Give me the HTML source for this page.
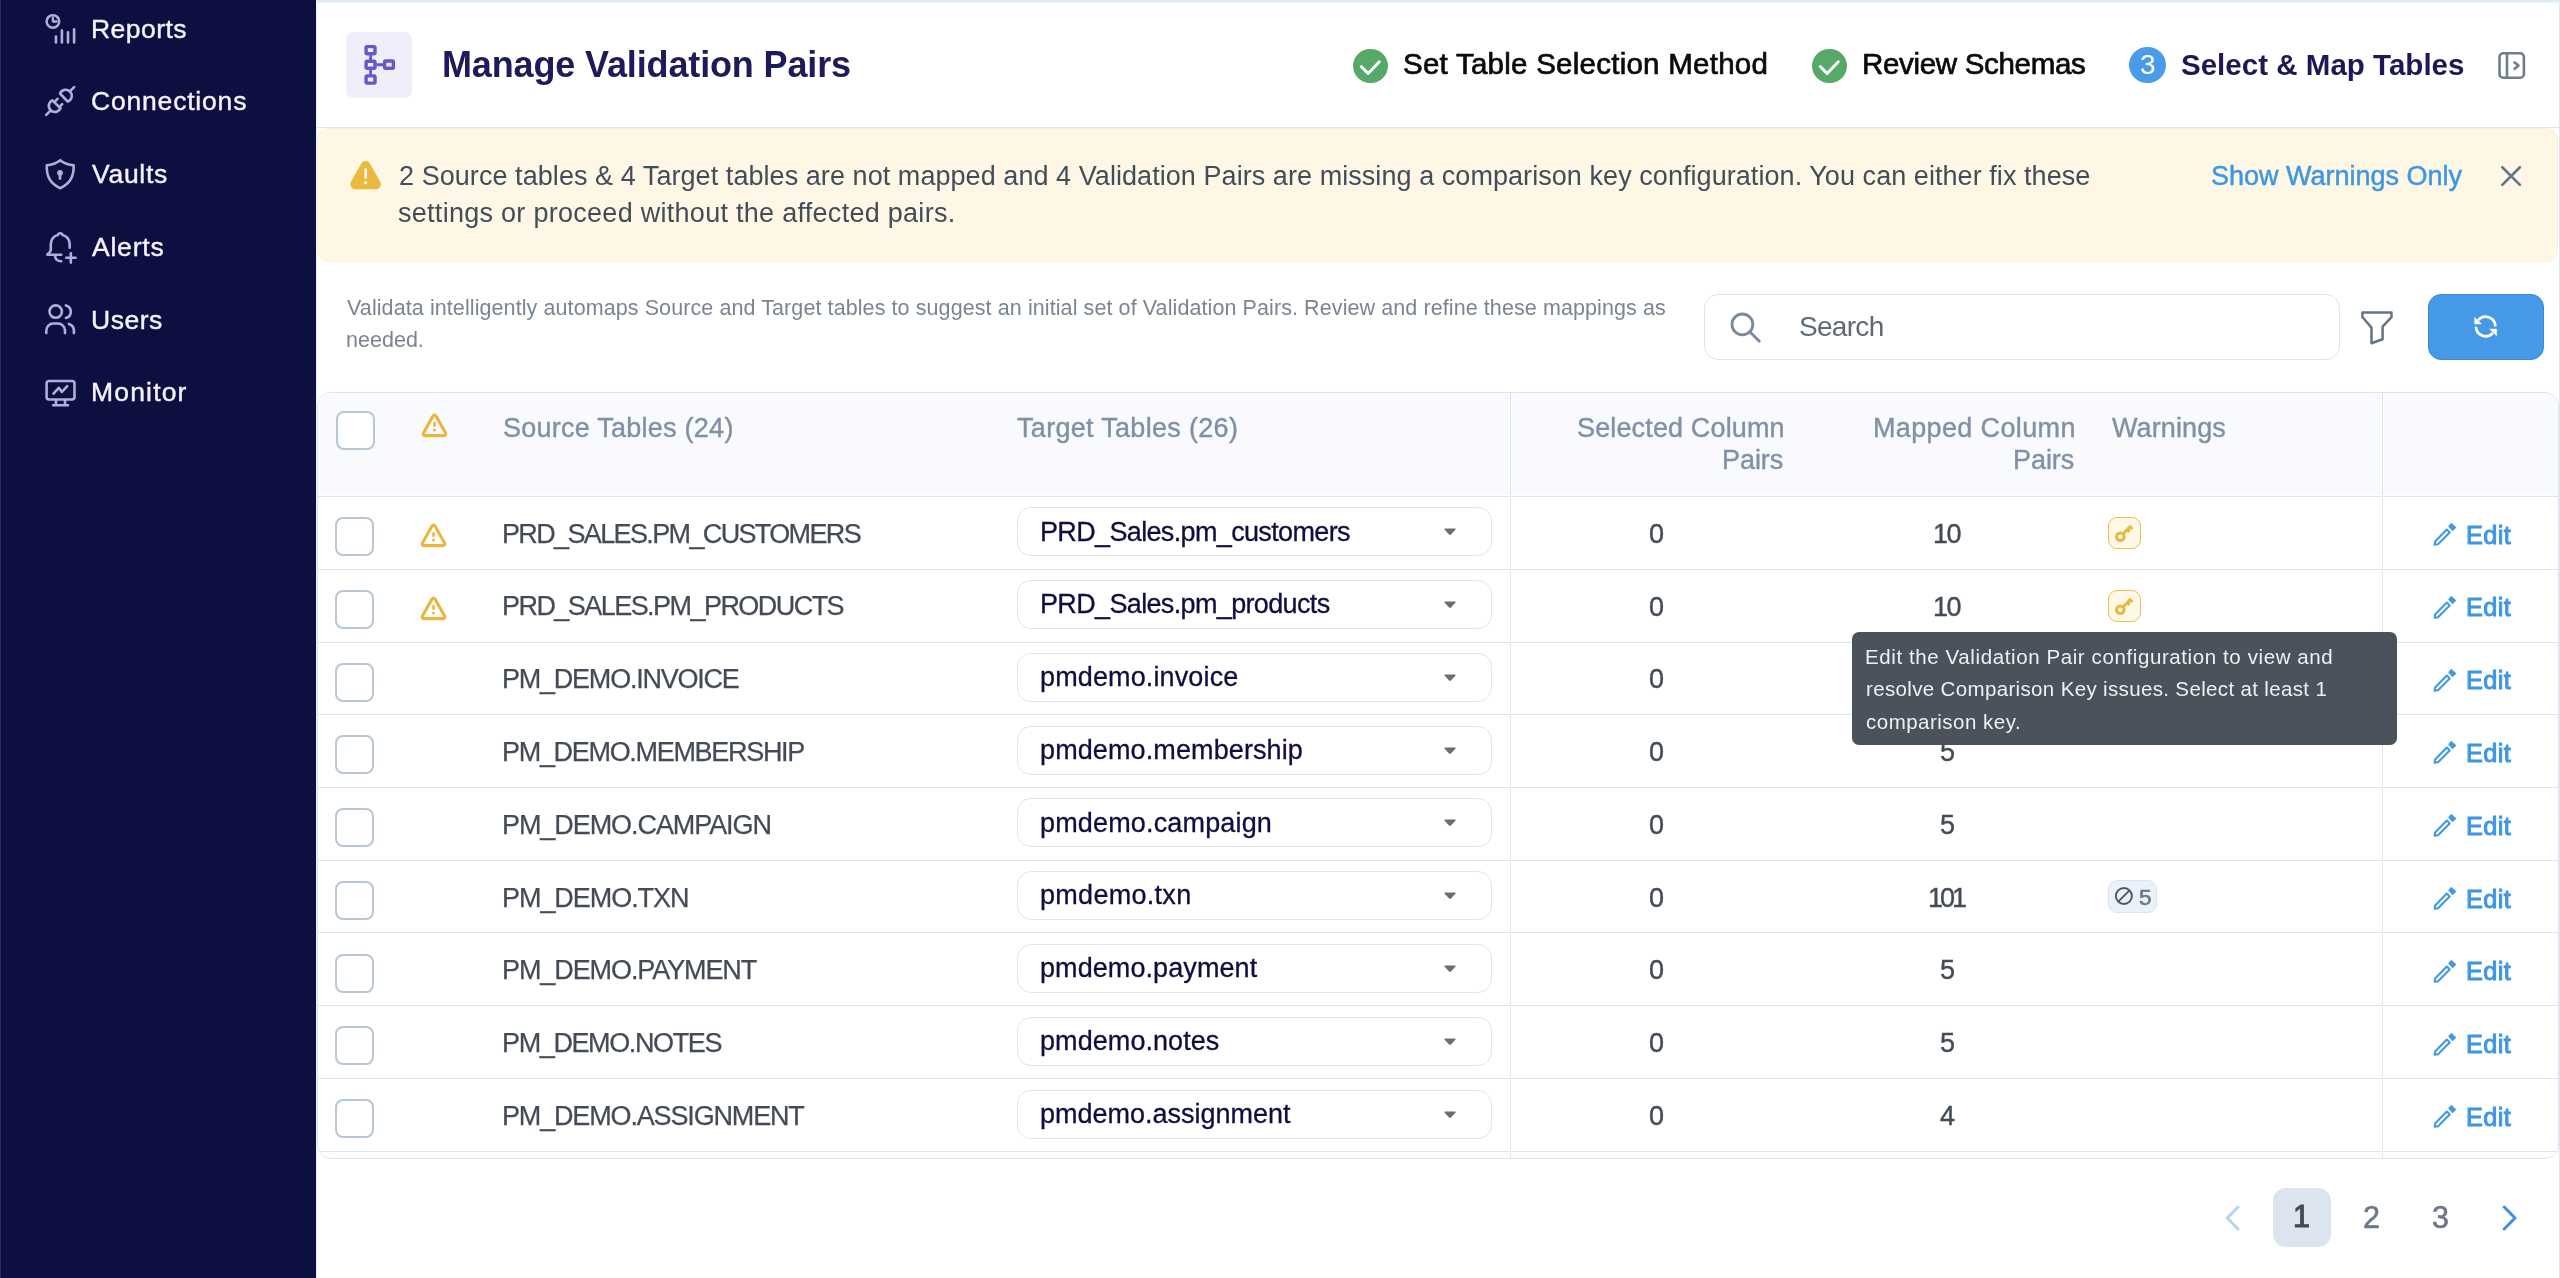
<!DOCTYPE html>
<html lang="en"><head><meta charset="utf-8"><title>Manage Validation Pairs</title>
<style>
*{box-sizing:border-box;margin:0;padding:0}
html,body{width:2560px;height:1278px;overflow:hidden;background:#fff}
body{position:relative;font-family:"Liberation Sans",sans-serif;-webkit-font-smoothing:antialiased}
div,svg,span{position:absolute}
.t{white-space:pre;line-height:1;display:block;will-change:transform}
#side{left:0;top:0;width:316px;height:1278px;background:#0e0f41}
#side-edge{left:0;top:0;width:1px;height:1278px;background:#2a2a57}
.si{left:44px;width:34px;height:34px;fill:none;stroke:#b0aedb;stroke-width:2.6;stroke-linecap:round;stroke-linejoin:round}
#lborder{left:316px;top:0;width:1px;height:1278px;background:#e8f2fb}
#rborder{left:2559px;top:0;width:1px;height:1278px;background:#dce5f0}
#topline{left:317px;top:0;width:2243px;height:3px;background:linear-gradient(#d9e4f1,#eef3f9)}
#hline{left:317px;top:127px;width:2243px;height:1px;background:#dce5ef}
#hicon{left:346px;top:32px;width:66px;height:66px;border-radius:7px;background:#efeefa}
.gc{width:34.7px;height:34.4px;border-radius:50%;background:#56a968}
#bc{left:2129px;top:47px;width:37px;height:36.4px;border-radius:50%;background:#4a9be8}
#banner{left:317px;top:128px;width:2241px;height:134px;border-radius:12px;background:#fef7e6;border:1px solid #fcf0d3}
#search{left:1704px;top:294px;width:636px;height:66px;border-radius:14px;border:1px solid #dbe4ef;background:#fff}
#btn{left:2428px;top:294px;width:116px;height:66px;border-radius:13px;background:#4699e7;border:1px solid #3b87d6}
#table{left:317px;top:392px;width:2242px;height:767px;border:1px solid #dce5f0;border-radius:14px;background:#fff;overflow:hidden}
#thead{left:318px;top:393px;width:2240px;height:102px;background:#f8fafd;border-radius:13px 13px 0 0}
.hl{left:318px;width:2240px;height:1px;background:#dce5f0}
.vl{top:393px;width:1px;height:765px;background:#dce5f0}
.cb{width:39px;height:39px;border:2.5px solid #b9c6d4;border-radius:8px;background:#fff}
.sel{left:1017px;width:475px;height:49px;border:1px solid #dce5f0;border-radius:14px;background:#fff}
.caret{left:1443px}
.kb{left:2108px;width:33px;height:32px;border:1.5px solid #ecc152;border-radius:9px;background:#fff8e6}
.kb svg{left:-1.5px;top:-0.4px}
.bd{left:2108px;width:49px;height:33px;border:1.5px solid #dbe5f1;border-radius:9px;background:#eaf1f9}
.bd svg{left:5px;top:5px}
.pen{left:2432px}
#tip{left:1852px;top:632px;width:545px;height:113px;border-radius:7px;background:#4b525c}
#pgact{left:2273px;top:1188px;width:58px;height:59px;border-radius:13px;background:#dbe4ef}
.gap{width:1px;height:3px;background:#fff}
</style></head>
<body>
<div id="side"></div><div id="side-edge"></div>
<svg class="si" style="top:13px" width="34" height="34" viewBox="0 0 34 34"><circle cx="8.9" cy="8.46" r="6.3" stroke-width="2.5"/><path d="M8.9 4.7V8.5H12.6" stroke-width="2.3"/><path d="M11.96 23.5V29.5M17.9 17.6V29.5M24 19.3V29.5M30.1 16.3V29.5" stroke-width="2.6"/></svg>
<svg class="si" style="top:85px" width="34" height="34" viewBox="0 0 34 34"><path d="M2.2 29.9L6.3 25.8"/><path d="M8.36 15.34L16.5 23.3A6.1 6.1 0 1 1 8.36 15.34Z"/><path d="M10.3 17.1L13.5 13.8M15.3 22.1L18.2 19.1"/><path d="M16 8.5L23.7 16.6A6.1 6.1 0 1 0 16 8.5Z"/><path d="M26.06 6.12L30.1 2.04"/></svg>
<svg class="si" style="top:158px" width="34" height="34" viewBox="0 0 34 34"><path d="M16.2 2.2C12 5.6 7 7 2.8 7.2C2.2 17.5 6.6 26 16.2 30.2C25.8 26 30.2 17.5 29.6 7.2C25.4 7 20.4 5.6 16.2 2.2Z"/><circle cx="16" cy="14.8" r="2.9" fill="#b0aedb" stroke="none"/><path d="M16 15V20.6" stroke-width="2.8"/></svg>
<svg class="si" style="top:231px" width="34" height="34" viewBox="0 0 34 34"><path d="M25.7 16.8V13C25.7 8 22 4.6 18.6 3.9C18 1.6 14.4 1.6 13.8 3.9C10.4 4.6 6.8 8 6.8 13V18.4C6.8 20.4 5 22 3.3 23.7H17.2"/><path d="M11.2 25.3C11.2 28 13.6 30.3 17.2 30.3"/><path d="M22.3 26.8H31.6M26.85 22.4V31.6"/></svg>
<svg class="si" style="top:303px" width="34" height="34" viewBox="0 0 34 34"><circle cx="11.7" cy="8.6" r="6.2"/><path d="M21.9 2.4A6.5 6.5 0 0 1 21.9 15"/><path d="M2.3 30.1V27.5A7 7 0 0 1 9.3 20.5H14A7 7 0 0 1 21 27.5V30.1"/><path d="M24.9 20.9A7 7 0 0 1 29.9 27.5V30.1"/></svg>
<svg class="si" style="top:378px" width="34" height="34" viewBox="0 0 34 34"><rect x="2.6" y="3" width="27.9" height="18.5" rx="2.4"/><path d="M11.96 22V26.9M21.04 22V26.9M9.2 27.2H24"/><path d="M9.5 15.6L14.8 9.8L17.9 14L23.2 8.1"/></svg>
<div id="lborder"></div><div id="rborder"></div><div id="topline"></div><div id="hline"></div>
<div id="hicon"><svg style="left:0;top:0" width="66" height="66" viewBox="0 0 66 66"><g fill="none" stroke="#6558c8" stroke-width="3.4" stroke-linejoin="round"><rect x="20.1" y="14.6" width="8.9" height="7.1" rx="1"/><rect x="20.1" y="29.2" width="8.9" height="7" rx="1"/><rect x="20.1" y="43.9" width="8.9" height="7.2" rx="1"/><rect x="38.6" y="29" width="8.8" height="7.2" rx="1"/><path d="M24.6 23V28M24.6 38V42.5M30.5 32.8H37" stroke-width="2.9"/></g></svg></div>
<div class="gc" style="left:1353px;top:48.6px"><svg style="left:0;top:0" width="35" height="35" viewBox="0 0 35 35"><path d="M8.3 17.6L15.1 24.4L26.3 12.7" fill="none" stroke="#fff" stroke-width="2.9" stroke-linecap="round" stroke-linejoin="round"/></svg></div>
<div class="gc" style="left:1812px;top:48.6px"><svg style="left:0;top:0" width="35" height="35" viewBox="0 0 35 35"><path d="M8.3 17.6L15.1 24.4L26.3 12.7" fill="none" stroke="#fff" stroke-width="2.9" stroke-linecap="round" stroke-linejoin="round"/></svg></div>
<div id="bc"></div>
<svg style="left:2497.8px;top:51.7px" width="28" height="28" viewBox="0 0 28 28"><g fill="none" stroke="#6e7e90" stroke-width="2.6" stroke-linejoin="round" stroke-linecap="round"><rect x="1.5" y="1.3" width="24.4" height="24.5" rx="3.8"/><path d="M9 1.3V25.8"/><path d="M16.6 10.4L20.5 13.5L16.6 16.8"/></g></svg>
<div id="banner"></div>
<svg style="left:349.5px;top:160.6px" width="32" height="29" viewBox="0 0 32 29"><path d="M11.24 2.52A5.00 5.00 0 0 1 19.96 2.52L30.23 20.86A5.00 5.00 0 0 1 25.87 28.30L5.33 28.30A5.00 5.00 0 0 1 0.97 20.86Z" fill="#eab940"/><rect x="14.4" y="7.3" width="2.5" height="10.2" rx="1.2" fill="#fff"/><circle cx="15.6" cy="21.7" r="1.5" fill="#fff"/></svg>
<svg style="left:2499.5px;top:165.2px" width="23" height="23" viewBox="0 0 23 23"><path d="M2.3 2.3L19.9 19.9M19.9 2.3L2.3 19.9" fill="none" stroke="#687788" stroke-width="2.7" stroke-linecap="round"/></svg>
<div id="search"></div>
<svg style="left:1729px;top:311px" width="32" height="32" viewBox="0 0 32 32"><circle cx="13.4" cy="13.4" r="10.4" fill="none" stroke="#7a8a9c" stroke-width="2.8"/><path d="M21 21L30.3 30.3" stroke="#7a8a9c" stroke-width="2.8" stroke-linecap="round"/></svg>
<svg style="left:2360px;top:311px" width="34" height="34" viewBox="0 0 34 34"><path d="M2.4 1.4H31.5V6.2L22.6 15.7V28.3L11.5 32.2V16.6L2.4 6Z" fill="none" stroke="#667484" stroke-width="2.5" stroke-linejoin="round"/></svg>
<div id="btn"><svg style="left:44px;top:19px" width="26" height="26" viewBox="0 0 26 26"><g fill="none" stroke="#fff" stroke-width="2.7"><path d="M5.2 6.2A9.7 9.7 0 0 1 22.3 12.4"/><path d="M2.9 12.9A9.7 9.7 0 0 0 19.8 19"/></g><path d="M1.6 3.2V10.1H8.6Z M23.7 21.9V15H16.6Z" fill="#fff" stroke="#fff" stroke-width="0.4" stroke-linejoin="round"/></svg></div>
<div id="table"></div><div id="thead"></div>
<div class="vl" style="left:1510px"></div><div class="vl" style="left:2382px"></div>
<div class="cb" style="left:336px;top:411px"></div>
<svg style="left:419px;top:411px" width="31" height="29" viewBox="0 0 31 29"><path d="M14.02 4.95A1.70 1.70 0 0 1 16.98 4.95L26.58 22.07A1.70 1.70 0 0 1 25.10 24.60L5.90 24.60A1.70 1.70 0 0 1 4.42 22.07Z" fill="none" stroke="#e9b73f" stroke-width="3.1" stroke-linejoin="round"/><path d="M15.5 12.1V14.7" stroke="#e9b73f" stroke-width="2.6" stroke-linecap="round"/><circle cx="15.5" cy="19.1" r="1.5" fill="#e9b73f"/></svg>
<div class="gap" style="left:1510px;top:495px"></div>
<div class="gap" style="left:2382px;top:495px"></div>
<div class="gap" style="left:1510px;top:568px"></div>
<div class="gap" style="left:2382px;top:568px"></div>
<div class="gap" style="left:1510px;top:641px"></div>
<div class="gap" style="left:2382px;top:641px"></div>
<div class="gap" style="left:1510px;top:713px"></div>
<div class="gap" style="left:2382px;top:713px"></div>
<div class="gap" style="left:1510px;top:786px"></div>
<div class="gap" style="left:2382px;top:786px"></div>
<div class="gap" style="left:1510px;top:859px"></div>
<div class="gap" style="left:2382px;top:859px"></div>
<div class="gap" style="left:1510px;top:931px"></div>
<div class="gap" style="left:2382px;top:931px"></div>
<div class="gap" style="left:1510px;top:1004px"></div>
<div class="gap" style="left:2382px;top:1004px"></div>
<div class="gap" style="left:1510px;top:1077px"></div>
<div class="gap" style="left:2382px;top:1077px"></div>
<div class="gap" style="left:1510px;top:1150px"></div>
<div class="gap" style="left:2382px;top:1150px"></div>
<div class="hl" style="top:496px"></div>
<div class="hl" style="top:569px"></div>
<div class="cb" style="left:335px;top:517px"></div>
<div class="sel" style="top:507px"></div>
<svg class="caret" style="top:527.3px" width="14" height="9" viewBox="0 0 14 9"><path d="M1.8 1.6H12.2Q13 1.9 12.4 2.7L7.9 7.6Q7 8.4 6.1 7.6L1.6 2.7Q1 1.9 1.8 1.6Z" fill="#6a6d72"/></svg>
<svg style="left:417.8px;top:521.2px" width="31" height="29" viewBox="0 0 31 29"><path d="M14.02 4.95A1.70 1.70 0 0 1 16.98 4.95L26.58 22.07A1.70 1.70 0 0 1 25.10 24.60L5.90 24.60A1.70 1.70 0 0 1 4.42 22.07Z" fill="none" stroke="#e9b73f" stroke-width="3.1" stroke-linejoin="round"/><path d="M15.5 12.1V14.7" stroke="#e9b73f" stroke-width="2.6" stroke-linecap="round"/><circle cx="15.5" cy="19.1" r="1.5" fill="#e9b73f"/></svg>
<div class="kb" style="top:517px"><svg style="" width="33" height="32" viewBox="0 0 33 32"><circle cx="12.3" cy="18.8" r="3.8" fill="none" stroke="#e9b73f" stroke-width="3"/><path d="M15.2 15.8L23 7.8M19.4 11.6L21.6 13.8M22.2 8.8L24.4 11" stroke="#e9b73f" stroke-width="3" stroke-linecap="butt" fill="none"/></svg></div>
<svg class="pen" style="top:522.0px" width="26" height="26" viewBox="0 0 26 26"><path d="M3.1 19.5L14.8 7.6L17.7 10.4L6 22.3L2.7 22.8Z" fill="none" stroke="#4299e6" stroke-width="2.1" stroke-linejoin="round"/><path d="M19.3 1.6L23.5 5.5L20.6 8.4L16.9 4.4Z" fill="#4299e6" stroke="#4299e6" stroke-width="1.2" stroke-linejoin="round"/></svg>
<div class="hl" style="top:642px"></div>
<div class="cb" style="left:335px;top:590px"></div>
<div class="sel" style="top:580px"></div>
<svg class="caret" style="top:600.1px" width="14" height="9" viewBox="0 0 14 9"><path d="M1.8 1.6H12.2Q13 1.9 12.4 2.7L7.9 7.6Q7 8.4 6.1 7.6L1.6 2.7Q1 1.9 1.8 1.6Z" fill="#6a6d72"/></svg>
<svg style="left:417.8px;top:594.0px" width="31" height="29" viewBox="0 0 31 29"><path d="M14.02 4.95A1.70 1.70 0 0 1 16.98 4.95L26.58 22.07A1.70 1.70 0 0 1 25.10 24.60L5.90 24.60A1.70 1.70 0 0 1 4.42 22.07Z" fill="none" stroke="#e9b73f" stroke-width="3.1" stroke-linejoin="round"/><path d="M15.5 12.1V14.7" stroke="#e9b73f" stroke-width="2.6" stroke-linecap="round"/><circle cx="15.5" cy="19.1" r="1.5" fill="#e9b73f"/></svg>
<div class="kb" style="top:590px"><svg style="" width="33" height="32" viewBox="0 0 33 32"><circle cx="12.3" cy="18.8" r="3.8" fill="none" stroke="#e9b73f" stroke-width="3"/><path d="M15.2 15.8L23 7.8M19.4 11.6L21.6 13.8M22.2 8.8L24.4 11" stroke="#e9b73f" stroke-width="3" stroke-linecap="butt" fill="none"/></svg></div>
<svg class="pen" style="top:594.8px" width="26" height="26" viewBox="0 0 26 26"><path d="M3.1 19.5L14.8 7.6L17.7 10.4L6 22.3L2.7 22.8Z" fill="none" stroke="#4299e6" stroke-width="2.1" stroke-linejoin="round"/><path d="M19.3 1.6L23.5 5.5L20.6 8.4L16.9 4.4Z" fill="#4299e6" stroke="#4299e6" stroke-width="1.2" stroke-linejoin="round"/></svg>
<div class="hl" style="top:714px"></div>
<div class="cb" style="left:335px;top:663px"></div>
<div class="sel" style="top:653px"></div>
<svg class="caret" style="top:672.9px" width="14" height="9" viewBox="0 0 14 9"><path d="M1.8 1.6H12.2Q13 1.9 12.4 2.7L7.9 7.6Q7 8.4 6.1 7.6L1.6 2.7Q1 1.9 1.8 1.6Z" fill="#6a6d72"/></svg>
<svg class="pen" style="top:667.6px" width="26" height="26" viewBox="0 0 26 26"><path d="M3.1 19.5L14.8 7.6L17.7 10.4L6 22.3L2.7 22.8Z" fill="none" stroke="#4299e6" stroke-width="2.1" stroke-linejoin="round"/><path d="M19.3 1.6L23.5 5.5L20.6 8.4L16.9 4.4Z" fill="#4299e6" stroke="#4299e6" stroke-width="1.2" stroke-linejoin="round"/></svg>
<div class="hl" style="top:787px"></div>
<div class="cb" style="left:335px;top:735px"></div>
<div class="sel" style="top:726px"></div>
<svg class="caret" style="top:745.6px" width="14" height="9" viewBox="0 0 14 9"><path d="M1.8 1.6H12.2Q13 1.9 12.4 2.7L7.9 7.6Q7 8.4 6.1 7.6L1.6 2.7Q1 1.9 1.8 1.6Z" fill="#6a6d72"/></svg>
<svg class="pen" style="top:740.3px" width="26" height="26" viewBox="0 0 26 26"><path d="M3.1 19.5L14.8 7.6L17.7 10.4L6 22.3L2.7 22.8Z" fill="none" stroke="#4299e6" stroke-width="2.1" stroke-linejoin="round"/><path d="M19.3 1.6L23.5 5.5L20.6 8.4L16.9 4.4Z" fill="#4299e6" stroke="#4299e6" stroke-width="1.2" stroke-linejoin="round"/></svg>
<div class="hl" style="top:860px"></div>
<div class="cb" style="left:335px;top:808px"></div>
<div class="sel" style="top:798px"></div>
<svg class="caret" style="top:818.4px" width="14" height="9" viewBox="0 0 14 9"><path d="M1.8 1.6H12.2Q13 1.9 12.4 2.7L7.9 7.6Q7 8.4 6.1 7.6L1.6 2.7Q1 1.9 1.8 1.6Z" fill="#6a6d72"/></svg>
<svg class="pen" style="top:813.1px" width="26" height="26" viewBox="0 0 26 26"><path d="M3.1 19.5L14.8 7.6L17.7 10.4L6 22.3L2.7 22.8Z" fill="none" stroke="#4299e6" stroke-width="2.1" stroke-linejoin="round"/><path d="M19.3 1.6L23.5 5.5L20.6 8.4L16.9 4.4Z" fill="#4299e6" stroke="#4299e6" stroke-width="1.2" stroke-linejoin="round"/></svg>
<div class="hl" style="top:932px"></div>
<div class="cb" style="left:335px;top:881px"></div>
<div class="sel" style="top:871px"></div>
<svg class="caret" style="top:891.2px" width="14" height="9" viewBox="0 0 14 9"><path d="M1.8 1.6H12.2Q13 1.9 12.4 2.7L7.9 7.6Q7 8.4 6.1 7.6L1.6 2.7Q1 1.9 1.8 1.6Z" fill="#6a6d72"/></svg>
<div class="bd" style="top:880px"><svg style="" width="20" height="20" viewBox="0 0 20 20"><circle cx="9.9" cy="10" r="8" fill="none" stroke="#4e5560" stroke-width="1.9"/><path d="M4.3 15.7L15.5 4.3" stroke="#4e5560" stroke-width="1.9"/></svg></div>
<svg class="pen" style="top:885.9px" width="26" height="26" viewBox="0 0 26 26"><path d="M3.1 19.5L14.8 7.6L17.7 10.4L6 22.3L2.7 22.8Z" fill="none" stroke="#4299e6" stroke-width="2.1" stroke-linejoin="round"/><path d="M19.3 1.6L23.5 5.5L20.6 8.4L16.9 4.4Z" fill="#4299e6" stroke="#4299e6" stroke-width="1.2" stroke-linejoin="round"/></svg>
<div class="hl" style="top:1005px"></div>
<div class="cb" style="left:335px;top:954px"></div>
<div class="sel" style="top:944px"></div>
<svg class="caret" style="top:964.0px" width="14" height="9" viewBox="0 0 14 9"><path d="M1.8 1.6H12.2Q13 1.9 12.4 2.7L7.9 7.6Q7 8.4 6.1 7.6L1.6 2.7Q1 1.9 1.8 1.6Z" fill="#6a6d72"/></svg>
<svg class="pen" style="top:958.7px" width="26" height="26" viewBox="0 0 26 26"><path d="M3.1 19.5L14.8 7.6L17.7 10.4L6 22.3L2.7 22.8Z" fill="none" stroke="#4299e6" stroke-width="2.1" stroke-linejoin="round"/><path d="M19.3 1.6L23.5 5.5L20.6 8.4L16.9 4.4Z" fill="#4299e6" stroke="#4299e6" stroke-width="1.2" stroke-linejoin="round"/></svg>
<div class="hl" style="top:1078px"></div>
<div class="cb" style="left:335px;top:1026px"></div>
<div class="sel" style="top:1017px"></div>
<svg class="caret" style="top:1036.8px" width="14" height="9" viewBox="0 0 14 9"><path d="M1.8 1.6H12.2Q13 1.9 12.4 2.7L7.9 7.6Q7 8.4 6.1 7.6L1.6 2.7Q1 1.9 1.8 1.6Z" fill="#6a6d72"/></svg>
<svg class="pen" style="top:1031.5px" width="26" height="26" viewBox="0 0 26 26"><path d="M3.1 19.5L14.8 7.6L17.7 10.4L6 22.3L2.7 22.8Z" fill="none" stroke="#4299e6" stroke-width="2.1" stroke-linejoin="round"/><path d="M19.3 1.6L23.5 5.5L20.6 8.4L16.9 4.4Z" fill="#4299e6" stroke="#4299e6" stroke-width="1.2" stroke-linejoin="round"/></svg>
<div class="hl" style="top:1151px"></div>
<div class="cb" style="left:335px;top:1099px"></div>
<div class="sel" style="top:1090px"></div>
<svg class="caret" style="top:1109.5px" width="14" height="9" viewBox="0 0 14 9"><path d="M1.8 1.6H12.2Q13 1.9 12.4 2.7L7.9 7.6Q7 8.4 6.1 7.6L1.6 2.7Q1 1.9 1.8 1.6Z" fill="#6a6d72"/></svg>
<svg class="pen" style="top:1104.2px" width="26" height="26" viewBox="0 0 26 26"><path d="M3.1 19.5L14.8 7.6L17.7 10.4L6 22.3L2.7 22.8Z" fill="none" stroke="#4299e6" stroke-width="2.1" stroke-linejoin="round"/><path d="M19.3 1.6L23.5 5.5L20.6 8.4L16.9 4.4Z" fill="#4299e6" stroke="#4299e6" stroke-width="1.2" stroke-linejoin="round"/></svg>
<svg style="left:2225px;top:1205px" width="16" height="26" viewBox="0 0 16 26"><path d="M13 2L2.2 13L13 24" fill="none" stroke="#b3d4f6" stroke-width="3" stroke-linecap="round" stroke-linejoin="round"/></svg>
<div id="pgact"></div>
<svg style="left:2502px;top:1205px" width="16" height="26" viewBox="0 0 16 26"><path d="M2.2 2L13 13L2.2 24" fill="none" stroke="#3b8fe4" stroke-width="3" stroke-linecap="round" stroke-linejoin="round"/></svg>
<span class="t" style="left:90.9px;top:15.7px;font-size:26.5px;color:#f4f3fb;letter-spacing:0.47px;-webkit-text-stroke:0.4px #f4f3fb;">Reports</span>
<span class="t" style="left:91.3px;top:87.7px;font-size:26.5px;color:#f4f3fb;letter-spacing:0.81px;-webkit-text-stroke:0.4px #f4f3fb;">Connections</span>
<span class="t" style="left:92.1px;top:160.7px;font-size:26.5px;color:#f4f3fb;letter-spacing:0.72px;-webkit-text-stroke:0.4px #f4f3fb;">Vaults</span>
<span class="t" style="left:92.1px;top:233.7px;font-size:26.5px;color:#f4f3fb;letter-spacing:0.78px;-webkit-text-stroke:0.4px #f4f3fb;">Alerts</span>
<span class="t" style="left:90.9px;top:306.7px;font-size:26.5px;color:#f4f3fb;letter-spacing:0.52px;-webkit-text-stroke:0.4px #f4f3fb;">Users</span>
<span class="t" style="left:90.9px;top:378.7px;font-size:26.5px;color:#f4f3fb;letter-spacing:1.18px;-webkit-text-stroke:0.4px #f4f3fb;">Monitor</span>
<span class="t" style="left:441.5px;top:47.1px;font-size:36px;color:#1d1b59;font-weight:700;letter-spacing:-0.14px;">Manage Validation Pairs</span>
<span class="t" style="left:1403.1px;top:48.9px;font-size:29.5px;color:#0b0b0f;letter-spacing:0.25px;-webkit-text-stroke:0.7px #0b0b0f;">Set Table Selection Method</span>
<span class="t" style="left:1862.0px;top:48.9px;font-size:29.5px;color:#0b0b0f;letter-spacing:-0.32px;-webkit-text-stroke:0.7px #0b0b0f;">Review Schemas</span>
<span class="t" style="left:2140.4px;top:51.0px;font-size:28px;color:#ffffff;">3</span>
<span class="t" style="left:2180.6px;top:49.7px;font-size:29.5px;color:#1b1a56;font-weight:700;letter-spacing:0.02px;">Select &amp; Map Tables</span>
<span class="t" style="left:398.8px;top:163.2px;font-size:27px;color:#434d5a;letter-spacing:0.06px;">2 Source tables &amp; 4 Target tables are not mapped and 4 Validation Pairs are missing a comparison key configuration. You can either fix these</span>
<span class="t" style="left:398.3px;top:200.4px;font-size:27px;color:#434d5a;letter-spacing:0.28px;">settings or proceed without the affected pairs.</span>
<span class="t" style="left:2211.0px;top:162.9px;font-size:27px;color:#3f97e3;-webkit-text-stroke:0.5px #3f97e3;">Show Warnings Only</span>
<span class="t" style="left:346.5px;top:298.3px;font-size:21.5px;color:#7a8592;letter-spacing:0.09px;">Validata intelligently automaps Source and Target tables to suggest an initial set of Validation Pairs. Review and refine these mappings as</span>
<span class="t" style="left:345.5px;top:329.9px;font-size:21.5px;color:#7a8592;letter-spacing:0.02px;">needed.</span>
<span class="t" style="left:1799.3px;top:313.4px;font-size:28px;color:#5d6a79;letter-spacing:-0.70px;">Search</span>
<span class="t" style="left:503.0px;top:414.7px;font-size:27px;color:#8090a5;letter-spacing:0.25px;-webkit-text-stroke:0.4px #8090a5;">Source Tables (24)</span>
<span class="t" style="left:1017.3px;top:414.7px;font-size:27px;color:#8090a5;letter-spacing:0.31px;-webkit-text-stroke:0.4px #8090a5;">Target Tables (26)</span>
<span class="t" style="left:1576.5px;top:414.7px;font-size:27px;color:#8090a5;letter-spacing:0.14px;-webkit-text-stroke:0.4px #8090a5;">Selected Column</span>
<span class="t" style="left:1721.8px;top:446.5px;font-size:27px;color:#8090a5;letter-spacing:-0.07px;-webkit-text-stroke:0.4px #8090a5;">Pairs</span>
<span class="t" style="left:1872.5px;top:414.7px;font-size:27px;color:#8090a5;letter-spacing:0.36px;-webkit-text-stroke:0.4px #8090a5;">Mapped Column</span>
<span class="t" style="left:2013.0px;top:446.5px;font-size:27px;color:#8090a5;letter-spacing:-0.05px;-webkit-text-stroke:0.4px #8090a5;">Pairs</span>
<span class="t" style="left:2112.0px;top:414.7px;font-size:27px;color:#8090a5;letter-spacing:0.11px;-webkit-text-stroke:0.4px #8090a5;">Warnings</span>
<span class="t" style="left:502.0px;top:520.6px;font-size:27px;color:#434b56;letter-spacing:-1.64px;-webkit-text-stroke:0.25px #434b56;">PRD_SALES.PM_CUSTOMERS</span>
<span class="t" style="left:1039.9px;top:518.5px;font-size:27px;color:#0f0e40;letter-spacing:-0.65px;-webkit-text-stroke:0.3px #0f0e40;">PRD_Sales.pm_customers</span>
<span class="t" style="left:1649.1px;top:520.7px;font-size:27px;color:#434b56;-webkit-text-stroke:0.4px #434b56;">0</span>
<span class="t" style="left:1932.5px;top:520.7px;font-size:27px;color:#434b56;letter-spacing:-1.50px;-webkit-text-stroke:0.4px #434b56;">10</span>
<span class="t" style="left:2466.3px;top:522.6px;font-size:25.3px;color:#3f97e3;letter-spacing:0.43px;-webkit-text-stroke:1.0px #3f97e3;">Edit</span>
<span class="t" style="left:502.0px;top:593.4px;font-size:27px;color:#434b56;letter-spacing:-1.55px;-webkit-text-stroke:0.25px #434b56;">PRD_SALES.PM_PRODUCTS</span>
<span class="t" style="left:1039.9px;top:591.3px;font-size:27px;color:#0f0e40;letter-spacing:-0.65px;-webkit-text-stroke:0.3px #0f0e40;">PRD_Sales.pm_products</span>
<span class="t" style="left:1649.1px;top:593.5px;font-size:27px;color:#434b56;-webkit-text-stroke:0.4px #434b56;">0</span>
<span class="t" style="left:1932.5px;top:593.5px;font-size:27px;color:#434b56;letter-spacing:-1.50px;-webkit-text-stroke:0.4px #434b56;">10</span>
<span class="t" style="left:2466.3px;top:595.4px;font-size:25.3px;color:#3f97e3;letter-spacing:0.43px;-webkit-text-stroke:1.0px #3f97e3;">Edit</span>
<span class="t" style="left:502.0px;top:666.2px;font-size:27px;color:#434b56;letter-spacing:-1.23px;-webkit-text-stroke:0.25px #434b56;">PM_DEMO.INVOICE</span>
<span class="t" style="left:1040.0px;top:664.1px;font-size:27px;color:#0f0e40;letter-spacing:0.13px;-webkit-text-stroke:0.3px #0f0e40;">pmdemo.invoice</span>
<span class="t" style="left:1649.1px;top:666.3px;font-size:27px;color:#434b56;-webkit-text-stroke:0.4px #434b56;">0</span>
<span class="t" style="left:1939.5px;top:666.3px;font-size:27px;color:#434b56;-webkit-text-stroke:0.4px #434b56;">5</span>
<span class="t" style="left:2466.3px;top:668.2px;font-size:25.3px;color:#3f97e3;letter-spacing:0.43px;-webkit-text-stroke:1.0px #3f97e3;">Edit</span>
<span class="t" style="left:502.0px;top:739.0px;font-size:27px;color:#434b56;letter-spacing:-1.31px;-webkit-text-stroke:0.25px #434b56;">PM_DEMO.MEMBERSHIP</span>
<span class="t" style="left:1040.0px;top:736.9px;font-size:27px;color:#0f0e40;letter-spacing:0.11px;-webkit-text-stroke:0.3px #0f0e40;">pmdemo.membership</span>
<span class="t" style="left:1649.1px;top:739.1px;font-size:27px;color:#434b56;-webkit-text-stroke:0.4px #434b56;">0</span>
<span class="t" style="left:1939.5px;top:739.1px;font-size:27px;color:#434b56;-webkit-text-stroke:0.4px #434b56;">5</span>
<span class="t" style="left:2466.3px;top:740.9px;font-size:25.3px;color:#3f97e3;letter-spacing:0.43px;-webkit-text-stroke:1.0px #3f97e3;">Edit</span>
<span class="t" style="left:502.0px;top:811.8px;font-size:27px;color:#434b56;letter-spacing:-1.07px;-webkit-text-stroke:0.25px #434b56;">PM_DEMO.CAMPAIGN</span>
<span class="t" style="left:1040.0px;top:809.7px;font-size:27px;color:#0f0e40;letter-spacing:0.16px;-webkit-text-stroke:0.3px #0f0e40;">pmdemo.campaign</span>
<span class="t" style="left:1649.1px;top:811.9px;font-size:27px;color:#434b56;-webkit-text-stroke:0.4px #434b56;">0</span>
<span class="t" style="left:1939.5px;top:811.9px;font-size:27px;color:#434b56;-webkit-text-stroke:0.4px #434b56;">5</span>
<span class="t" style="left:2466.3px;top:813.7px;font-size:25.3px;color:#3f97e3;letter-spacing:0.43px;-webkit-text-stroke:1.0px #3f97e3;">Edit</span>
<span class="t" style="left:2139.0px;top:886.6px;font-size:22.5px;color:#6a788a;-webkit-text-stroke:0.6px #6a788a;">5</span>
<span class="t" style="left:502.0px;top:884.5px;font-size:27px;color:#434b56;letter-spacing:-1.05px;-webkit-text-stroke:0.25px #434b56;">PM_DEMO.TXN</span>
<span class="t" style="left:1040.0px;top:882.4px;font-size:27px;color:#0f0e40;letter-spacing:0.29px;-webkit-text-stroke:0.3px #0f0e40;">pmdemo.txn</span>
<span class="t" style="left:1649.1px;top:884.6px;font-size:27px;color:#434b56;-webkit-text-stroke:0.4px #434b56;">0</span>
<span class="t" style="left:1927.6px;top:884.6px;font-size:27px;color:#434b56;letter-spacing:-3.00px;-webkit-text-stroke:0.4px #434b56;">101</span>
<span class="t" style="left:2466.3px;top:886.5px;font-size:25.3px;color:#3f97e3;letter-spacing:0.43px;-webkit-text-stroke:1.0px #3f97e3;">Edit</span>
<span class="t" style="left:502.0px;top:957.3px;font-size:27px;color:#434b56;letter-spacing:-1.09px;-webkit-text-stroke:0.25px #434b56;">PM_DEMO.PAYMENT</span>
<span class="t" style="left:1040.0px;top:955.2px;font-size:27px;color:#0f0e40;letter-spacing:0.08px;-webkit-text-stroke:0.3px #0f0e40;">pmdemo.payment</span>
<span class="t" style="left:1649.1px;top:957.4px;font-size:27px;color:#434b56;-webkit-text-stroke:0.4px #434b56;">0</span>
<span class="t" style="left:1939.5px;top:957.4px;font-size:27px;color:#434b56;-webkit-text-stroke:0.4px #434b56;">5</span>
<span class="t" style="left:2466.3px;top:959.3px;font-size:25.3px;color:#3f97e3;letter-spacing:0.43px;-webkit-text-stroke:1.0px #3f97e3;">Edit</span>
<span class="t" style="left:502.0px;top:1030.1px;font-size:27px;color:#434b56;letter-spacing:-1.38px;-webkit-text-stroke:0.25px #434b56;">PM_DEMO.NOTES</span>
<span class="t" style="left:1040.0px;top:1028.0px;font-size:27px;color:#0f0e40;letter-spacing:0.07px;-webkit-text-stroke:0.3px #0f0e40;">pmdemo.notes</span>
<span class="t" style="left:1649.1px;top:1030.2px;font-size:27px;color:#434b56;-webkit-text-stroke:0.4px #434b56;">0</span>
<span class="t" style="left:1939.5px;top:1030.2px;font-size:27px;color:#434b56;-webkit-text-stroke:0.4px #434b56;">5</span>
<span class="t" style="left:2466.3px;top:1032.1px;font-size:25.3px;color:#3f97e3;letter-spacing:0.43px;-webkit-text-stroke:1.0px #3f97e3;">Edit</span>
<span class="t" style="left:502.0px;top:1102.9px;font-size:27px;color:#434b56;letter-spacing:-1.16px;-webkit-text-stroke:0.25px #434b56;">PM_DEMO.ASSIGNMENT</span>
<span class="t" style="left:1040.0px;top:1100.8px;font-size:27px;color:#0f0e40;-webkit-text-stroke:0.3px #0f0e40;">pmdemo.assignment</span>
<span class="t" style="left:1649.1px;top:1103.0px;font-size:27px;color:#434b56;-webkit-text-stroke:0.4px #434b56;">0</span>
<span class="t" style="left:1939.5px;top:1103.0px;font-size:27px;color:#434b56;-webkit-text-stroke:0.4px #434b56;">4</span>
<span class="t" style="left:2466.3px;top:1104.8px;font-size:25.3px;color:#3f97e3;letter-spacing:0.43px;-webkit-text-stroke:1.0px #3f97e3;">Edit</span>
<span class="t" style="left:2292.7px;top:1201.4px;font-size:30.5px;color:#434b56;-webkit-text-stroke:1.0px #434b56;">1</span>
<span class="t" style="left:2362.9px;top:1201.6px;font-size:30.5px;color:#6a7889;-webkit-text-stroke:0.6px #6a7889;">2</span>
<span class="t" style="left:2432.0px;top:1201.6px;font-size:30.5px;color:#6a7889;-webkit-text-stroke:0.6px #6a7889;">3</span>
<div id="tip"></div>
<span class="t" style="left:1864.7px;top:646.7px;font-size:20.5px;color:#eef0f3;letter-spacing:0.60px;">Edit the Validation Pair configuration to view and</span>
<span class="t" style="left:1865.7px;top:679.0px;font-size:20.5px;color:#eef0f3;letter-spacing:0.35px;">resolve Comparison Key issues. Select at least 1</span>
<span class="t" style="left:1865.7px;top:711.7px;font-size:20.5px;color:#eef0f3;letter-spacing:0.49px;">comparison key.</span>
</body></html>
